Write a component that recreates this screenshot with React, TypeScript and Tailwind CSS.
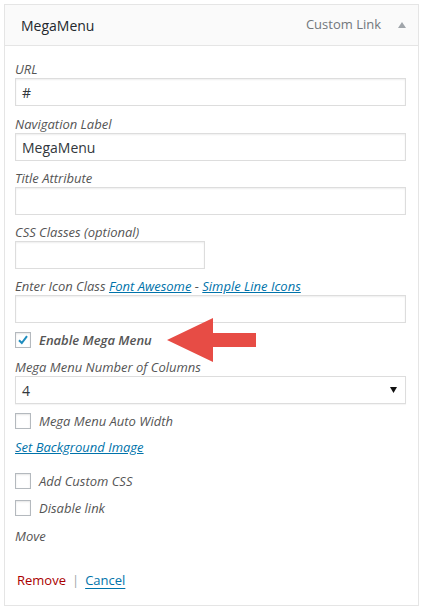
import React from "react";

const font = { fontFamily: '"Open Sans", "Liberation Sans", sans-serif' };

function Label({ children, className = "" }: { children: React.ReactNode; className?: string }) {
  return <div className={`text-[13px] leading-[18px] italic text-[#555] ${className}`}>{children}</div>;
}

function Input({ value = "", className = "w-full" }: { value?: string; className?: string }) {
  return (
    <div className={`h-[28px] border border-[#ddd] bg-white shadow-[inset_0_1px_2px_rgba(0,0,0,0.07)] flex items-center pl-[6px] text-[14px] text-[#32373c] ${className}`}>
      {value}
    </div>
  );
}

function Checkbox({ checked = false }: { checked?: boolean }) {
  return (
    <div className="w-[16px] h-[16px] border border-[#b4b9be] bg-white shadow-[inset_0_1px_2px_rgba(0,0,0,0.1)] flex items-center justify-center shrink-0">
      {checked && (
        <svg width="14" height="14" viewBox="0 0 14 14">
          <path d="M3 7.2 L5.8 10 L11 3.2" fill="none" stroke="#1e8cbe" strokeWidth="2" />
        </svg>
      )}
    </div>
  );
}

function CheckRow({ label, checked = false, bold = false, className = "" }: { label: string; checked?: boolean; bold?: boolean; className?: string }) {
  return (
    <div className={`flex items-center h-[16px] ${className}`}>
      <Checkbox checked={checked} />
      <span className={`ml-[8px] text-[13px] leading-[18px] italic text-[#555] ${bold ? "font-semibold" : ""}`}>{label}</span>
    </div>
  );
}

export default function App() {
  return (
    <div className="w-[423px] h-[610px] bg-white p-[4px]" style={font}>
      <div className="relative w-[415px] border border-[#e5e5e5] bg-white">
        <div className="h-[41px] bg-[#fafafa] border-b border-[#e5e5e5] flex items-center pl-[16px] pr-[12px]">
          <span className="text-[14px] text-[#23282d] font-normal">MegaMenu</span>
          <span className="ml-auto text-[13px] text-[#72777c]">Custom Link</span>
          <svg className="ml-[17px]" width="8" height="6" viewBox="0 0 8 6">
            <path d="M0 6 L4 0 L8 6 Z" fill="#a0a5aa" />
          </svg>
        </div>
        <div className="pl-[10px] pr-[12px] pt-[14px] pb-[16px] flex flex-col">
          <Label>URL</Label>
          <Input value="#" />
          <Label className="mt-[9px]">Navigation Label</Label>
          <Input value="MegaMenu" />
          <Label className="mt-[8px]">Title Attribute</Label>
          <Input />
          <Label className="mt-[8px]">CSS Classes (optional)</Label>
          <Input className="w-[190px]" />
          <Label className="mt-[8px]">
            Enter Icon Class <span className="underline text-[#0073aa]">Font Awesome</span> -{" "}
            <span className="underline text-[#0073aa]">Simple Line Icons</span>
          </Label>
          <Input />
          <CheckRow className="mt-[9px]" label="Enable Mega Menu" checked bold />
          <Label className="mt-[10px]">Mega Menu Number of Columns</Label>
          <div className="h-[28px] border border-[#ddd] bg-white flex items-center pl-[6px] pr-[8px] text-[14px] text-[#32373c] shadow-[0_1px_1px_rgba(0,0,0,0.04)]">
            <span>4</span>
            <svg className="ml-auto" width="7" height="6" viewBox="0 0 7 6">
              <path d="M0 0 L7 0 L3.5 6 Z" fill="#111" />
            </svg>
          </div>
          <CheckRow className="mt-[9px]" label="Mega Menu Auto Width" />
          <div className="mt-[9px] text-[13px] leading-[18px] italic text-[#0073aa]">
            <span className="underline">Set Background Image</span>
          </div>
          <CheckRow className="mt-[17px]" label="Add Custom CSS" />
          <CheckRow className="mt-[11px]" label="Disable link" />
          <Label className="mt-[11px]">Move</Label>
          <div className="mt-[26px] flex items-center text-[13px] leading-[18px] pl-[2px]">
            <span className="text-[#a00]">Remove</span>
            <span className="mx-[6px] text-[#a0a5aa]">|</span>
            <span className="text-[#0073aa] underline underline-offset-[3px]">Cancel</span>
          </div>
        </div>
        <svg className="absolute left-[162px] top-[313px]" width="92" height="46" viewBox="0 0 92 46">
          <polygon points="0,22 46,0 46,15 89,15 89,29 46,29 46,44" fill="#e74c45" />
        </svg>
      </div>
    </div>
  );
}
